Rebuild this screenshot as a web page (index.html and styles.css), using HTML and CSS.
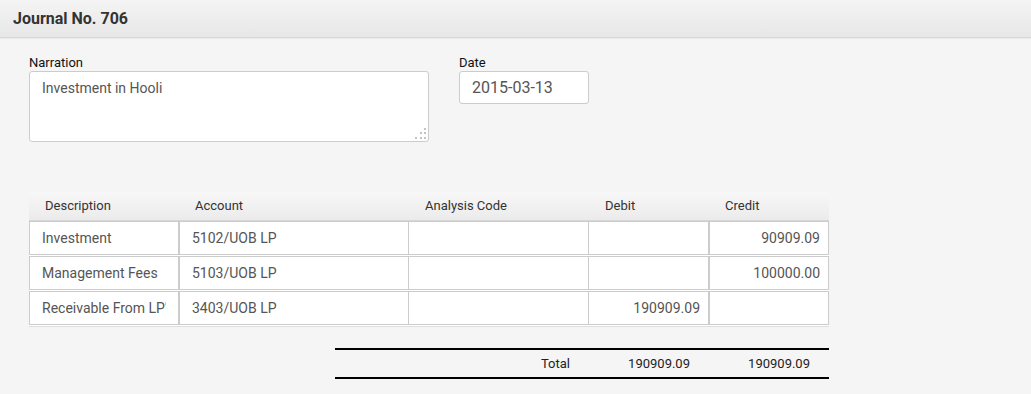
FILE: index.html
```html
<!DOCTYPE html>
<html>
<head>
  <meta charset="UTF-8">
  <title>Journal No. 706</title>
  <link rel="stylesheet" href="styles.css">
</head>
<body>
  <div class="page-header">
    <h1 class="page-title">Journal No. 706</h1>
  </div>

  <div class="page-body">
    <div class="form-row">
      <div class="field field-narration">
        <label class="field-label">Narration</label>
        <div class="textarea-wrap">
          <textarea class="field-textarea">Investment in Hooli</textarea>
          <svg class="grip" width="12" height="12" viewBox="0 0 12 12">
            <rect x="9" y="0" width="2" height="2"/>
            <rect x="5" y="4" width="2" height="2"/>
            <rect x="9" y="4" width="2" height="2"/>
            <rect x="0" y="9" width="2" height="2"/>
            <rect x="5" y="9" width="2" height="2"/>
            <rect x="9" y="9" width="2" height="2"/>
          </svg>
        </div>
      </div>
      <div class="field field-date">
        <label class="field-label">Date</label>
        <input type="text" class="field-input" value="2015-03-13">
      </div>
    </div>

    <div class="lines">
      <div class="lines-head">
        <div>Description</div>
        <div>Account</div>
        <div>Analysis Code</div>
        <div>Debit</div>
        <div>Credit</div>
      </div>
      <div class="line">
        <input class="cell cell-desc" value="Investment">
        <input class="cell cell-account" value="5102/UOB LP">
        <input class="cell cell-analysis" value="">
        <input class="cell cell-debit num" value="">
        <input class="cell cell-credit num" value="90909.09">
      </div>
      <div class="line">
        <input class="cell cell-desc" value="Management Fees">
        <input class="cell cell-account" value="5103/UOB LP">
        <input class="cell cell-analysis" value="">
        <input class="cell cell-debit num" value="">
        <input class="cell cell-credit num" value="100000.00">
      </div>
      <div class="line">
        <input class="cell cell-desc" value="Receivable From LP's">
        <input class="cell cell-account" value="3403/UOB LP">
        <input class="cell cell-analysis" value="">
        <input class="cell cell-debit num" value="190909.09">
        <input class="cell cell-credit num" value="">
      </div>
    </div>

    <div class="totals">
      <div>Total</div>
      <div>190909.09</div>
      <div>190909.09</div>
    </div>
  </div>
</body>
</html>
```

FILE: styles.css
```css
body {
  margin: 0;
  font-family: Roboto, "Liberation Sans", Arial, sans-serif;
  background: #f5f5f5;
  color: #222;
}

.page-header {
  height: 37px;
  background: linear-gradient(#f4f4f4, #e7e7e7);
  border-bottom: 1px solid #d8d8d8;
  box-shadow: 0 1px 1px rgba(0, 0, 0, 0.04);
  padding-left: 13px;
  display: flex;
  align-items: center;
}

.page-title {
  margin: 0;
  font-size: 16px;
  font-weight: bold;
  color: #333;
}

.page-body {
  padding: 17px 29px 0;
}

.form-row {
  display: flex;
  gap: 30px;
}

.field {
  display: flex;
  flex-direction: column;
}

.field-label {
  font-size: 13px;
  line-height: 15px;
  color: #111;
  margin-bottom: 1px;
}

.textarea-wrap {
  position: relative;
  width: 400px;
  height: 71px;
}

.field-textarea {
  box-sizing: border-box;
  width: 100%;
  height: 100%;
  margin: 0;
  resize: none;
  border: 1px solid #ccc;
  border-radius: 3px;
  background: #fff;
  padding: 8px 12px;
  font-family: inherit;
  font-size: 14px;
  color: #555;
  outline: none;
}

.grip {
  position: absolute;
  right: 2px;
  bottom: 2px;
  fill: #c4c4c4;
}

.field-input {
  box-sizing: border-box;
  width: 130px;
  height: 33px;
  margin: 0;
  border: 1px solid #ccc;
  border-radius: 3px;
  background: #fff;
  padding: 0 12px;
  font-family: inherit;
  font-size: 16px;
  color: #555;
  outline: none;
}

.lines {
  margin-top: 50px;
  width: 800px;
  background: #fff;
  border-bottom: 1px solid #ddd;
}

.lines-head,
.line {
  display: grid;
  grid-template-columns: 150px 230px 180px 120px 120px;
}

.lines-head {
  height: 28px;
  background: linear-gradient(#f7f7f7, #ebebeb);
  border-bottom: 1px solid #d6d6d6;
  font-size: 13px;
  color: #333;
  align-items: center;
}

.lines-head div {
  padding-left: 16px;
  padding-bottom: 1px;
}

.line {
  padding-bottom: 1px;
}

.cell {
  box-sizing: border-box;
  height: 34px;
  min-width: 0;
  width: 100%;
  margin: 0;
  border: 1px solid #ccc;
  border-radius: 0;
  background: #fff;
  padding: 0 12px;
  font-family: inherit;
  font-size: 14px;
  color: #555;
  outline: none;
}

.cell-analysis,
.cell-debit {
  border-left: none;
}

.num {
  text-align: right;
  padding-right: 8px;
}

.line:first-of-type .cell {
  border-top: none;
}

.totals {
  margin: 21px 0 0 306px;
  width: 494px;
  display: grid;
  grid-template-columns: 254px 120px 120px;
  height: 27px;
  align-items: center;
  border-top: 2px solid #000;
  border-bottom: 2px solid #000;
  font-size: 13px;
  color: #222;
}

.totals div {
  text-align: right;
  padding-right: 19px;
}
```
